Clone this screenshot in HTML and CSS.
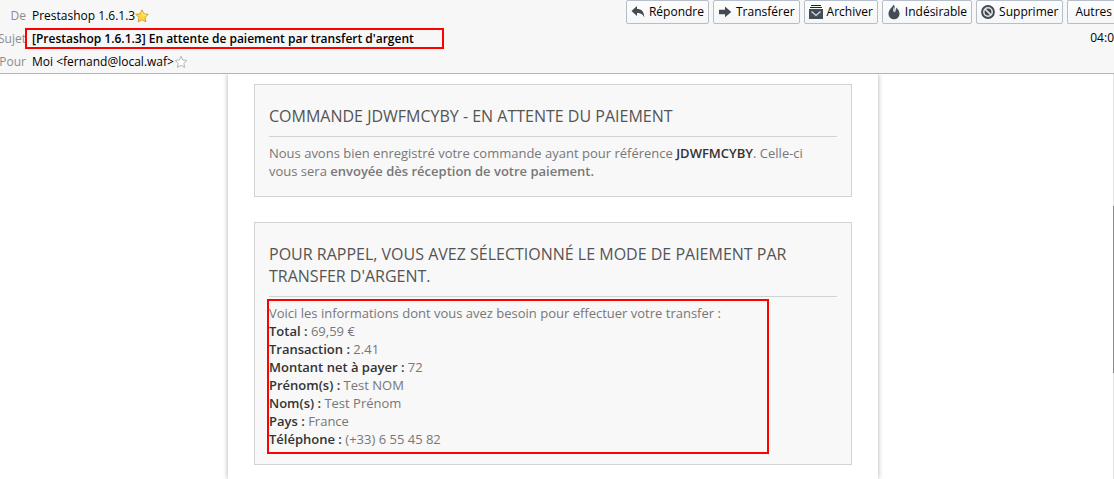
FILE: index.html
```html
<!DOCTYPE html>
<html lang="fr">
<head>
<meta charset="utf-8">
<title>En attente de paiement par transfert d'argent</title>
<link rel="stylesheet" href="styles.css">
</head>
<body>
<header class="message-header">
  <dl class="fields">
    <div class="field">
      <dt>De</dt>
      <dd>Prestashop 1.6.1.3<button class="star" type="button" aria-label="Contact enregistré"><svg width="14" height="14" viewBox="0 0 14 14"><path d="M7 .8 8.9 4.8 13.3 5.3 10.1 8.4 10.9 12.9 7 10.8 3.1 12.9 3.9 8.4 .7 5.3 5.1 4.8Z" fill="#ffd83d" stroke="#dca03b" stroke-linejoin="round"/><path d="M7 3 8 5.8 11 6.2" fill="none" stroke="#fff1a0"/></svg></button></dd>
    </div>
    <div class="field">
      <dt>Sujet</dt>
      <dd class="subject">[Prestashop 1.6.1.3] En attente de paiement par transfert d'argent</dd>
    </div>
    <div class="field">
      <dt>Pour</dt>
      <dd>Moi &lt;fernand@local.waf&gt;<button class="star" type="button" aria-label="Ajouter le contact"><svg width="14" height="14" viewBox="0 0 14 14"><path d="M7 1.2 8.7 5 12.8 5.4 9.8 8.3 10.6 12.4 7 10.4 3.4 12.4 4.2 8.3 1.2 5.4 5.3 5Z" fill="#fff" stroke="#b5b5b5" stroke-linejoin="round"/></svg></button></dd>
    </div>
  </dl>
  <div class="side">
    <div class="toolbar">
      <button class="tool" type="button"><svg width="14" height="14" viewBox="0 0 14 14"><path d="M.5 6 6 1V4C10.5 4 13.2 6.5 13.2 12.5 11.8 9 9.5 8 6 8V11Z" fill="#434a51"/></svg>Répondre</button>
      <button class="tool" type="button"><svg width="14" height="14" viewBox="0 0 14 14"><path d="M1 4.7H7V1.5L13.3 7 7 12.2V9.3H1Z" fill="#434a51"/></svg>Transférer</button>
      <button class="tool" type="button"><svg width="14" height="14" viewBox="0 0 14 14"><path d="M2 .5H12M1 2.5H13" stroke="#22262a"/><path d="M0 4H14V14H0Z" fill="#434d57"/><path d="M2.5 6.5 7 10.5 11.5 6.5" fill="none" stroke="#d7dce0" stroke-width="1.3"/></svg>Archiver</button>
      <button class="tool" type="button"><svg width="14" height="16" viewBox="0 0 14 16"><path d="M6.7 .5C6 3 1.5 5 1.5 10A5.5 5.3 0 0 0 12.5 10C12.5 7.5 11.6 5.5 9 3.5 9.2 5 9.2 7 8.4 8 8.5 5 7.8 2.5 6.7 .5Z" fill="#434d57"/><path d="M6.5 4C5.8 6 6.2 7.6 7.6 8.6 8.2 6.5 7.8 4.4 7.2 2.7Z" fill="#e9edf0"/></svg>Indésirable</button>
      <button class="tool" type="button"><svg width="14" height="14" viewBox="0 0 14 14"><circle cx="7" cy="7" r="6.9" fill="#434a51"/><circle cx="7" cy="7" r="4.2" fill="none" stroke="#e4e8eb" stroke-width="1.5"/><path d="M4 4 10 10" stroke="#e4e8eb" stroke-width="1.7"/></svg>Supprimer</button>
      <button class="tool tool-more" type="button">Autres</button>
    </div>
    <time class="sent">04:0</time>
  </div>
</header>
<main class="viewer">
  <article class="mail">
    <section class="card">
      <h1>Commande JDWFMCYBY - En attente du paiement</h1>
      <p>Nous avons bien enregistré votre commande ayant pour référence <strong>JDWFMCYBY</strong>. Celle-ci<br>vous sera <b>envoyée dès réception de votre paiement.</b></p>
    </section>
    <section class="card">
      <h2>Pour rappel, vous avez sélectionné le mode de paiement par transfer d'argent.</h2>
      <div class="details">
        <p>Voici les informations dont vous avez besoin pour effectuer votre transfer :</p>
        <p><strong>Total :</strong> 69,59 €</p>
        <p><strong>Transaction :</strong> 2.41</p>
        <p><strong>Montant net à payer :</strong> 72</p>
        <p><strong>Prénom(s) :</strong> Test NOM</p>
        <p><strong>Nom(s) :</strong> Test Prénom</p>
        <p><strong>Pays :</strong> France</p>
        <p><strong>Téléphone :</strong> (+33) 6 55 45 82</p>
      </div>
    </section>
  </article>
  <div class="scroll-track"><div class="scroll-thumb"></div></div>
</main>
</body>
</html>
```
FILE: styles.css
```css
* { box-sizing: border-box; }
html, body { height: 100%; }
body {
  margin: 0;
  display: flex;
  flex-direction: column;
  overflow: hidden;
  background: #fff;
  font-family: "Open Sans", "Noto Sans", sans-serif;
  font-size: 13px;
  line-height: 18px;
  color: #777;
}
h1, h2, p, dl, dd { margin: 0; }
b, strong { font-weight: 600; }
button { font: inherit; color: inherit; }

.message-header {
  flex: none;
  display: flex;
  justify-content: space-between;
  background: #f7f7f7;
  border-bottom: 1px solid #a9b7c9;
  font-size: 12px;
  color: #000;
  white-space: nowrap;
}
.fields {
  display: grid;
  gap: 2px;
  padding: 5px 0 1px;
}
.field {
  display: flex;
  align-items: center;
}
.field dt {
  width: 26px;
  display: flex;
  justify-content: flex-end;
  color: #8c8c8c;
}
.field dd {
  display: flex;
  align-items: center;
  height: 21px;
  margin-left: 6px;
}
.field .subject {
  width: 419px;
  margin-left: -1px;
  padding-left: 5px;
  border: 2px solid #f00;
  font-weight: 600;
}
.star {
  display: flex;
  padding: 0;
  border: 0;
  background: none;
}
.side {
  display: flex;
  flex-direction: column;
  gap: 5px;
}
.toolbar {
  display: flex;
  gap: 4px;
}
.tool {
  display: flex;
  align-items: center;
  gap: 4px;
  height: 24px;
  padding: 0 4px;
  border: 1px solid #b5bfcc;
  border-radius: 2px;
  background: linear-gradient(#fdfdfd, #f5f6f8);
}
.tool-more {
  padding: 0 2px 0 7px;
  border-right: 0;
  border-radius: 2px 0 0 2px;
}
.sent { align-self: flex-end; }

.viewer {
  flex: 1;
  min-height: 0;
  display: flex;
  overflow: hidden;
}
.mail {
  width: 650px;
  margin: 0 auto;
  padding: 10px 26px 14px;
  display: flex;
  flex-direction: column;
  gap: 25px;
  box-shadow: 0 0 5px #aaa;
}
.card {
  padding: 20px 14px 16px;
  border: 1px solid #d2d3d5;
  background: #f8f8f8;
}
.card h1, .card h2 {
  margin-bottom: 7px;
  padding-bottom: 9px;
  border-bottom: 1px solid #d2d3d5;
  font-size: 16px;
  font-weight: 400;
  line-height: 22px;
  text-transform: uppercase;
  color: #555454;
}
.card strong { color: #333; }
.details {
  width: 502px;
  margin: -5px 0 -6px -2px;
  padding: 3px 0 4px;
  border: 2px solid #f00;
}
.scroll-track {
  width: 1px;
  margin-left: 7px;
  padding-top: 132px;
  background: #e4e4e4;
}
.scroll-thumb {
  height: 167px;
  background: #8a8a8a;
}
```
